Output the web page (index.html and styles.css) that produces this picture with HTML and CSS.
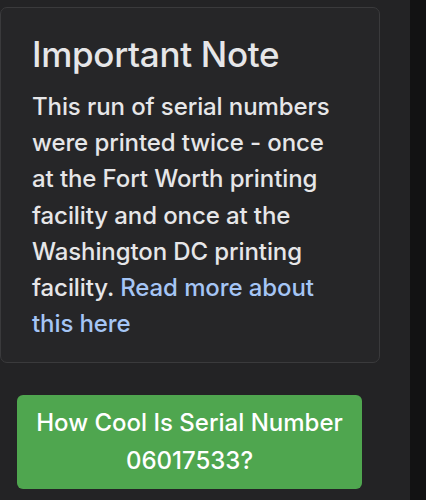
FILE: index.html
```html
<!DOCTYPE html>
<html>
<head>
<meta charset="utf-8">
<link rel="stylesheet" href="styles.css">
</head>
<body>
<div class="page">
  <main class="main">
    <section class="card">
      <h2 class="card-title">Important Note</h2>
      <p class="card-text">This run of serial numbers were printed twice - once at the Fort Worth printing facility and once at the Washington DC printing facility. <a class="link" href="#">Read more about this here</a></p>
    </section>
    <a class="btn" href="#">How Cool Is Serial Number 06017533?</a>
  </main>
  <div class="strip"></div>
</div>
</body>
</html>
```

FILE: styles.css
```css
html, body {
  margin: 0;
  padding: 0;
  height: 100%;
}
body {
  background: #111112;
  font-family: Inter, "Noto Sans", sans-serif;
  color: #e6e6e8;
}
.page {
  display: flex;
  height: 500px;
  overflow: hidden;
}
.main {
  width: 410px;
  background: #232325;
  padding-top: 7px;
  box-sizing: border-box;
}
.strip {
  flex: 1;
  background: #121213;
}
.card {
  width: 380px;
  box-sizing: border-box;
  background: #262628;
  border: 1px solid #3a3a3c;
  border-radius: 7px;
  padding: 25px 34px 20px 31px;
}
.card-title {
  margin: 0 0 14px;
  font-size: 35px;
  font-weight: 500;
  line-height: 42px;
  letter-spacing: -0.3px;
}
.card-text {
  margin: 0;
  font-size: 24px;
  font-weight: 500;
  line-height: 36.2px;
  letter-spacing: -0.1px;
}
.link {
  color: #a5c5f5;
  text-decoration: none;
}
.btn {
  display: flex;
  align-items: center;
  justify-content: center;
  text-align: center;
  margin: 32px 0 0 17px;
  width: 345px;
  height: 94px;
  box-sizing: border-box;
  padding: 0 12px;
  background: #4fa64f;
  border-radius: 6px;
  color: #ffffff;
  text-decoration: none;
  font-size: 24px;
  font-weight: 500;
  line-height: 38px;
}
```
